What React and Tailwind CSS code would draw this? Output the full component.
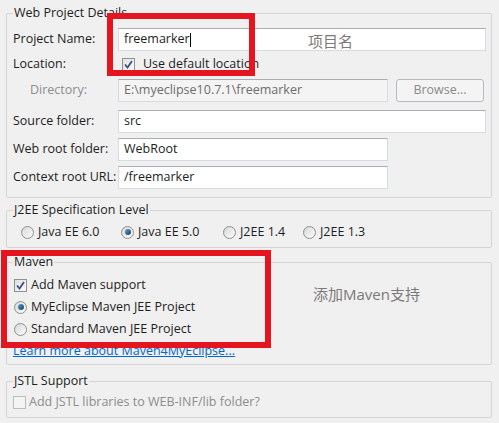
import React from 'react';

function CheckBox({ checked, disabled }) {
    return (
        <span
            className={
                'inline-flex items-center justify-center w-[13px] h-[13px] border shrink-0 ' +
                (disabled
                    ? 'border-[#bcbcbc] bg-[#f4f4f4]'
                    : 'border-[#8e8f8f] bg-gradient-to-br from-[#e0e0e0] to-[#fbfbfb]')
            }
        >
            {checked && (
                <svg width="11" height="11" viewBox="0 0 11 11">
                    <path d="M2 5.5 L4.5 8.5 L9 2" fill="none" stroke="#3d4f87" strokeWidth="1.8" />
                </svg>
            )}
        </span>
    );
}

function Radio({ checked }) {
    return (
        <span className="inline-flex items-center justify-center w-[13px] h-[13px] rounded-full border border-[#8e8f8f] bg-gradient-to-br from-[#d8d8d8] to-[#fcfcfc] shrink-0">
            {checked && (
                <span className="w-[6px] h-[6px] rounded-full bg-gradient-to-br from-[#5fa0c8] to-[#163e63]" />
            )}
        </span>
    );
}

function Field({ value, width, disabled }) {
    return (
        <div
            className={
                'h-[23px] flex items-center px-[5px] border border-[#d5dbe3] border-t-[#abadb3] ' +
                width +
                (disabled ? ' bg-[#f4f4f4] text-[#6d6d6d]' : ' bg-white')
            }
        >
            {value}
        </div>
    );
}

export default function App() {
    return (
        <div className="relative w-[499px] h-[423px] overflow-hidden bg-[#f0f0f0] px-[6px] pt-[5px] text-[12.5px] text-[#1e1e1e] font-['Open_Sans','Noto_Sans_CJK_SC',sans-serif]">
            {/* Web Project Details */}
            <fieldset className="w-[486px] border border-[#d5d5d5] rounded-[2px] pl-[6px] pr-[4px] pb-[8px]">
                <legend className="px-[1px] leading-[16px]">Web Project Details</legend>
                <div className="flex items-center h-[23px] mt-[7px]">
                    <span className="w-[105px]">Project Name:</span>
                    <Field value={<span>freemarker<span className="inline-block w-px h-[14px] bg-black align-middle" /></span>} width="w-[368px]" />
                </div>
                <div className="flex items-center h-[20px] mt-[3px]">
                    <span className="w-[105px]">Location:</span>
                    <span className="ml-[4px] flex items-center gap-[8px]">
                        <CheckBox checked />
                        <span>Use default location</span>
                    </span>
                </div>
                <div className="flex items-center h-[23px] mt-[5px]">
                    <span className="w-[105px] pl-[17px] text-[#8d8d8d]">Directory:</span>
                    <Field value="E:\myeclipse10.7.1\freemarker" width="w-[270px]" disabled />
                    <button className="ml-[8px] w-[88px] h-[23px] rounded-[3px] border border-[#b6babe] bg-[#f4f4f4] text-[#8a8a8a]">
                        Browse...
                    </button>
                </div>
                <div className="flex items-center h-[23px] mt-[8px]">
                    <span className="w-[105px]">Source folder:</span>
                    <Field value="src" width="w-[368px]" />
                </div>
                <div className="flex items-center h-[23px] mt-[5px]">
                    <span className="w-[105px]">Web root folder:</span>
                    <Field value="WebRoot" width="w-[270px]" />
                </div>
                <div className="flex items-center h-[23px] mt-[5px]">
                    <span className="w-[105px]">Context root URL:</span>
                    <Field value="/freemarker" width="w-[270px]" />
                </div>
            </fieldset>

            {/* J2EE Specification Level */}
            <fieldset className="w-[486px] mt-[4px] border border-[#d5d5d5] rounded-[2px] pl-[6px] pr-[4px] pb-[7px]">
                <legend className="px-[1px] leading-[16px]">J2EE Specification Level</legend>
                <div className="flex items-center h-[16px] mt-[6px] pl-[8px]">
                    <span className="w-[100px] flex items-center gap-[4px]"><Radio /><span>Java EE 6.0</span></span>
                    <span className="w-[102px] flex items-center gap-[4px]"><Radio checked /><span>Java EE 5.0</span></span>
                    <span className="w-[80px] flex items-center gap-[4px]"><Radio /><span>J2EE 1.4</span></span>
                    <span className="flex items-center gap-[4px]"><Radio /><span>J2EE 1.3</span></span>
                </div>
            </fieldset>

            {/* Maven */}
            <fieldset className="w-[486px] mt-[6px] border border-[#d5d5d5] rounded-[2px] pl-[6px] pr-[4px] pb-[2px]">
                <legend className="px-[1px] leading-[16px]">Maven</legend>
                <div className="flex items-center h-[22px] mt-[4px] pl-[1px] gap-[4px]">
                    <CheckBox checked />
                    <span>Add Maven support</span>
                </div>
                <div className="flex items-center h-[22px] pl-[1px] gap-[4px]">
                    <Radio checked />
                    <span>MyEclipse Maven JEE Project</span>
                </div>
                <div className="flex items-center h-[22px] pl-[1px] gap-[4px]">
                    <Radio />
                    <span>Standard Maven JEE Project</span>
                </div>
                <div className="flex items-center h-[22px]">
                    <span className="text-[#0066cc] underline">Learn more about Maven4MyEclipse...</span>
                </div>
            </fieldset>

            {/* JSTL Support */}
            <fieldset className="w-[486px] mt-[8px] border border-[#d5d5d5] rounded-[2px] pl-[6px] pr-[4px] pb-[7px]">
                <legend className="px-[1px] leading-[16px]">JSTL Support</legend>
                <div className="flex items-center h-[16px] mt-[5px] gap-[3px]">
                    <CheckBox disabled />
                    <span className="text-[#8d8d8d]">Add JSTL libraries to WEB-INF/lib folder?</span>
                </div>
            </fieldset>

            {/* annotations */}
            <div className="absolute left-[107px] top-[13px] w-[148px] h-[63px] border-[6px] border-[#e51520]" />
            <div className="absolute left-[308px] top-[30px] text-[15px] text-[#7a7a7a]">项目名</div>
            <div className="absolute left-[1px] top-[250px] w-[270px] h-[98px] border-[6px] border-[#e51520]" />
            <div className="absolute left-[313px] top-[283px] text-[15px] text-[#7a7a7a]">添加Maven支持</div>
        </div>
    );
}
